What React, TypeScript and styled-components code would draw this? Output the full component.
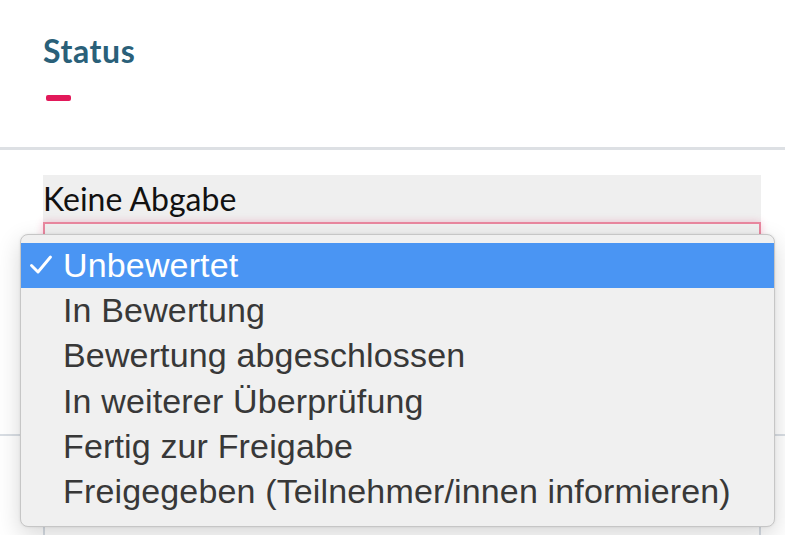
import React from "react";
import styled, { createGlobalStyle } from "styled-components";

const Global = createGlobalStyle`
  html, body { margin: 0; padding: 0; background: #ffffff; }
  body { width: 785px; height: 535px; overflow: hidden; font-family: "Lato", "Noto Sans", sans-serif; }
  #root { position: relative; width: 785px; height: 535px; overflow: hidden; }
`;

const Page = styled.div`
  position: relative;
  width: 785px;
  height: 535px;
  background: #ffffff;
`;

const Header = styled.header`
  height: 150px;
  box-sizing: border-box;
  padding: 31px 0 0 43px;
  border-bottom: 3px solid #dde0e4;
`;

const Title = styled.h2`
  margin: 0;
  font-family: "Lato", sans-serif;
  font-weight: 700;
  font-size: 32px;
  line-height: 40px;
  letter-spacing: 0.6px;
  color: #2a6079;
`;

const Accent = styled.div`
  margin: 24px 0 0 3px;
  width: 25px;
  height: 6px;
  border-radius: 2px;
  background: #e2195a;
`;

const Section = styled.section`
  height: 284px;
  box-sizing: border-box;
  padding: 25px 24px 0 43px;
`;

const Label = styled.div`
  height: 47px;
  background: #efefef;
  font-family: "Lato", sans-serif;
  font-size: 32px;
  line-height: 47px;
  color: #111111;
`;

const SelectBox = styled.div`
  height: 64px;
  box-sizing: border-box;
  border: 2px solid #e9879f;
  background: #f0f0f0;
  box-shadow: 0 0 8px rgba(226, 25, 90, 0.22);
`;

const Rule = styled.div`
  height: 2px;
  background: #d9dee4;
`;

const LowerSection = styled.section`
  padding: 0 24px 0 43px;
`;

const TableBox = styled.div`
  height: 100px;
  border-left: 2px solid #d6dce3;
  border-right: 2px solid #d6dce3;
`;

const Menu = styled.ul`
  position: absolute;
  left: 20px;
  top: 234px;
  width: 755px;
  height: 293px;
  box-sizing: border-box;
  margin: 0;
  padding: 8px 0 0;
  list-style: none;
  background: #f0f0f0;
  border: 1px solid #c6c6c6;
  border-radius: 8px;
  box-shadow: 0 8px 24px rgba(0, 0, 0, 0.16), 0 0 3px rgba(0, 0, 0, 0.08);
`;

const Item = styled.li<{ $active?: boolean }>`
  display: flex;
  align-items: center;
  height: 45.3px;
  background: ${(p) => (p.$active ? "#4a95f3" : "transparent")};
  color: ${(p) => (p.$active ? "#ffffff" : "#383838")};
  font-family: "Liberation Sans", Arial, sans-serif;
  font-size: 34px;
  line-height: 45px;
  letter-spacing: 0.15px;
  white-space: nowrap;
`;

const CheckCol = styled.span`
  display: flex;
  width: 42px;
  height: 45px;
  flex: none;
`;

const ItemText = styled.span`
  margin-top: -1px;
`;

const Check = () => (
  <svg width="42" height="45" viewBox="0 0 42 45">
    <path
      d="M10.5 22.5 L17 29 L29.5 14"
      fill="none"
      stroke="#ffffff"
      strokeWidth="2.9"
      strokeLinecap="round"
      strokeLinejoin="round"
    />
  </svg>
);

const options = [
  "Unbewertet",
  "In Bewertung",
  "Bewertung abgeschlossen",
  "In weiterer Überprüfung",
  "Fertig zur Freigabe",
  "Freigegeben (Teilnehmer/innen informieren)",
];

export default function App() {
  return (
    <Page>
      <Global />
      <Header>
        <Title>Status</Title>
        <Accent />
      </Header>
      <Section>
        <Label>Keine Abgabe</Label>
        <SelectBox />
      </Section>
      <Rule />
      <LowerSection>
        <TableBox />
      </LowerSection>
      <Menu>
        {options.map((o, i) => (
          <Item key={o} $active={i === 0}>
            <CheckCol>{i === 0 && <Check />}</CheckCol>
            <ItemText>{o}</ItemText>
          </Item>
        ))}
      </Menu>
    </Page>
  );
}
